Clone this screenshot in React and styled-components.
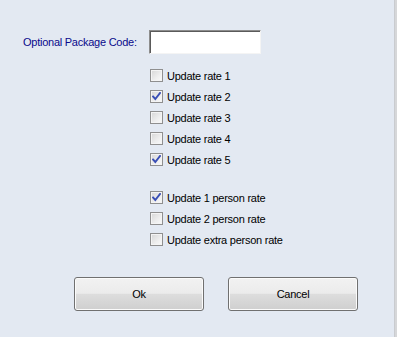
import React, { useState } from "react";
import styled, { createGlobalStyle } from "styled-components";

const GlobalStyle = createGlobalStyle`
  html, body {
    margin: 0;
    padding: 0;
    background: #e3e9f2;
  }
  body {
    font-family: "Liberation Sans", Arial, sans-serif;
    font-size: 11px;
  }
`;

const Window = styled.div`
  display: flex;
  width: 397px;
  height: 337px;
  background: #e3e9f2;
`;

const Panel = styled.div`
  flex: 1;
  display: flex;
  flex-direction: column;
  padding-top: 30px;
  border-right: 1px solid #c9cbcf;
`;

const Edge = styled.div`
  width: 2px;
  background: #d6d7d9;
`;

const CodeRow = styled.div`
  display: flex;
  align-items: center;
  padding-left: 23px;
  height: 24px;
`;

const Label = styled.label`
  width: 126px;
  color: #0a0a8c;
  font-size: 11px;
  letter-spacing: -0.25px;
`;

const CodeInput = styled.input`
  box-sizing: border-box;
  width: 112px;
  height: 24px;
  margin: 0;
  padding: 2px 3px;
  background: #fff;
  border: 1px solid;
  border-color: #8d8d8d #f4f4f4 #f4f4f4 #8d8d8d;
  box-shadow: inset 1px 1px 0 #5a5a5a;
  font-family: "Liberation Sans", Arial, sans-serif;
  font-size: 11px;
  outline: none;
`;

const Group = styled.div`
  display: flex;
  flex-direction: column;
  margin-left: 150px;
  margin-top: ${(p) => p.$top}px;
`;

const Row = styled.label`
  display: flex;
  align-items: center;
  height: 21px;
  gap: 4px;
  color: #000;
  font-size: 11px;
  letter-spacing: -0.25px;
  cursor: default;
`;

const Box = styled.span`
  box-sizing: border-box;
  display: flex;
  align-items: center;
  justify-content: center;
  width: 13px;
  height: 13px;
  border: 1px solid #8f8f8f;
  background: linear-gradient(135deg, #d6d6d6 0%, #eeeeee 60%, #fafafa 100%);
  box-shadow: inset 0 0 0 1px #f4f4f4;
`;

const Buttons = styled.div`
  display: flex;
  gap: 24px;
  margin-top: 27px;
  padding-left: 74px;
`;

const Button = styled.button`
  box-sizing: border-box;
  width: 130px;
  height: 34px;
  margin: 0;
  border: 1px solid #707070;
  border-radius: 3px;
  background: linear-gradient(
    to bottom,
    #f2f2f2 0%,
    #ebebeb 48%,
    #dddddd 50%,
    #cfcfcf 100%
  );
  box-shadow: inset 0 0 0 1px #fbfbfb;
  color: #000;
  font-family: "Liberation Sans", Arial, sans-serif;
  font-size: 11px;
  letter-spacing: -0.25px;
  cursor: default;
`;

const Check = () => (
  <svg width="9" height="9" viewBox="0 0 9 9">
    <path
      d="M1 4.5 L3.3 7 L8 1"
      fill="none"
      stroke="#3a4fb5"
      strokeWidth="1.9"
      strokeLinecap="square"
    />
  </svg>
);

const CheckItem = ({ label, checked, onToggle }) => (
  <Row onClick={onToggle}>
    <Box>{checked && <Check />}</Box>
    {label}
  </Row>
);

const rates = [
  { label: "Update rate 1", checked: false },
  { label: "Update rate 2", checked: true },
  { label: "Update rate 3", checked: false },
  { label: "Update rate 4", checked: false },
  { label: "Update rate 5", checked: true },
];

const persons = [
  { label: "Update 1 person rate", checked: true },
  { label: "Update 2 person rate", checked: false },
  { label: "Update extra person rate", checked: false },
];

export default function App() {
  const [rateState, setRateState] = useState(rates);
  const [personState, setPersonState] = useState(persons);
  const [code, setCode] = useState("");

  const toggle = (list, setList, i) =>
    setList(list.map((item, j) => (j === i ? { ...item, checked: !item.checked } : item)));

  return (
    <Window>
      <GlobalStyle />
      <Panel>
        <CodeRow>
          <Label htmlFor="pkg">Optional Package Code:</Label>
          <CodeInput id="pkg" value={code} onChange={(e) => setCode(e.target.value)} />
        </CodeRow>
        <Group $top={11}>
          {rateState.map((r, i) => (
            <CheckItem
              key={r.label}
              label={r.label}
              checked={r.checked}
              onToggle={() => toggle(rateState, setRateState, i)}
            />
          ))}
        </Group>
        <Group $top={17}>
          {personState.map((r, i) => (
            <CheckItem
              key={r.label}
              label={r.label}
              checked={r.checked}
              onToggle={() => toggle(personState, setPersonState, i)}
            />
          ))}
        </Group>
        <Buttons>
          <Button>Ok</Button>
          <Button>Cancel</Button>
        </Buttons>
      </Panel>
      <Edge />
    </Window>
  );
}
